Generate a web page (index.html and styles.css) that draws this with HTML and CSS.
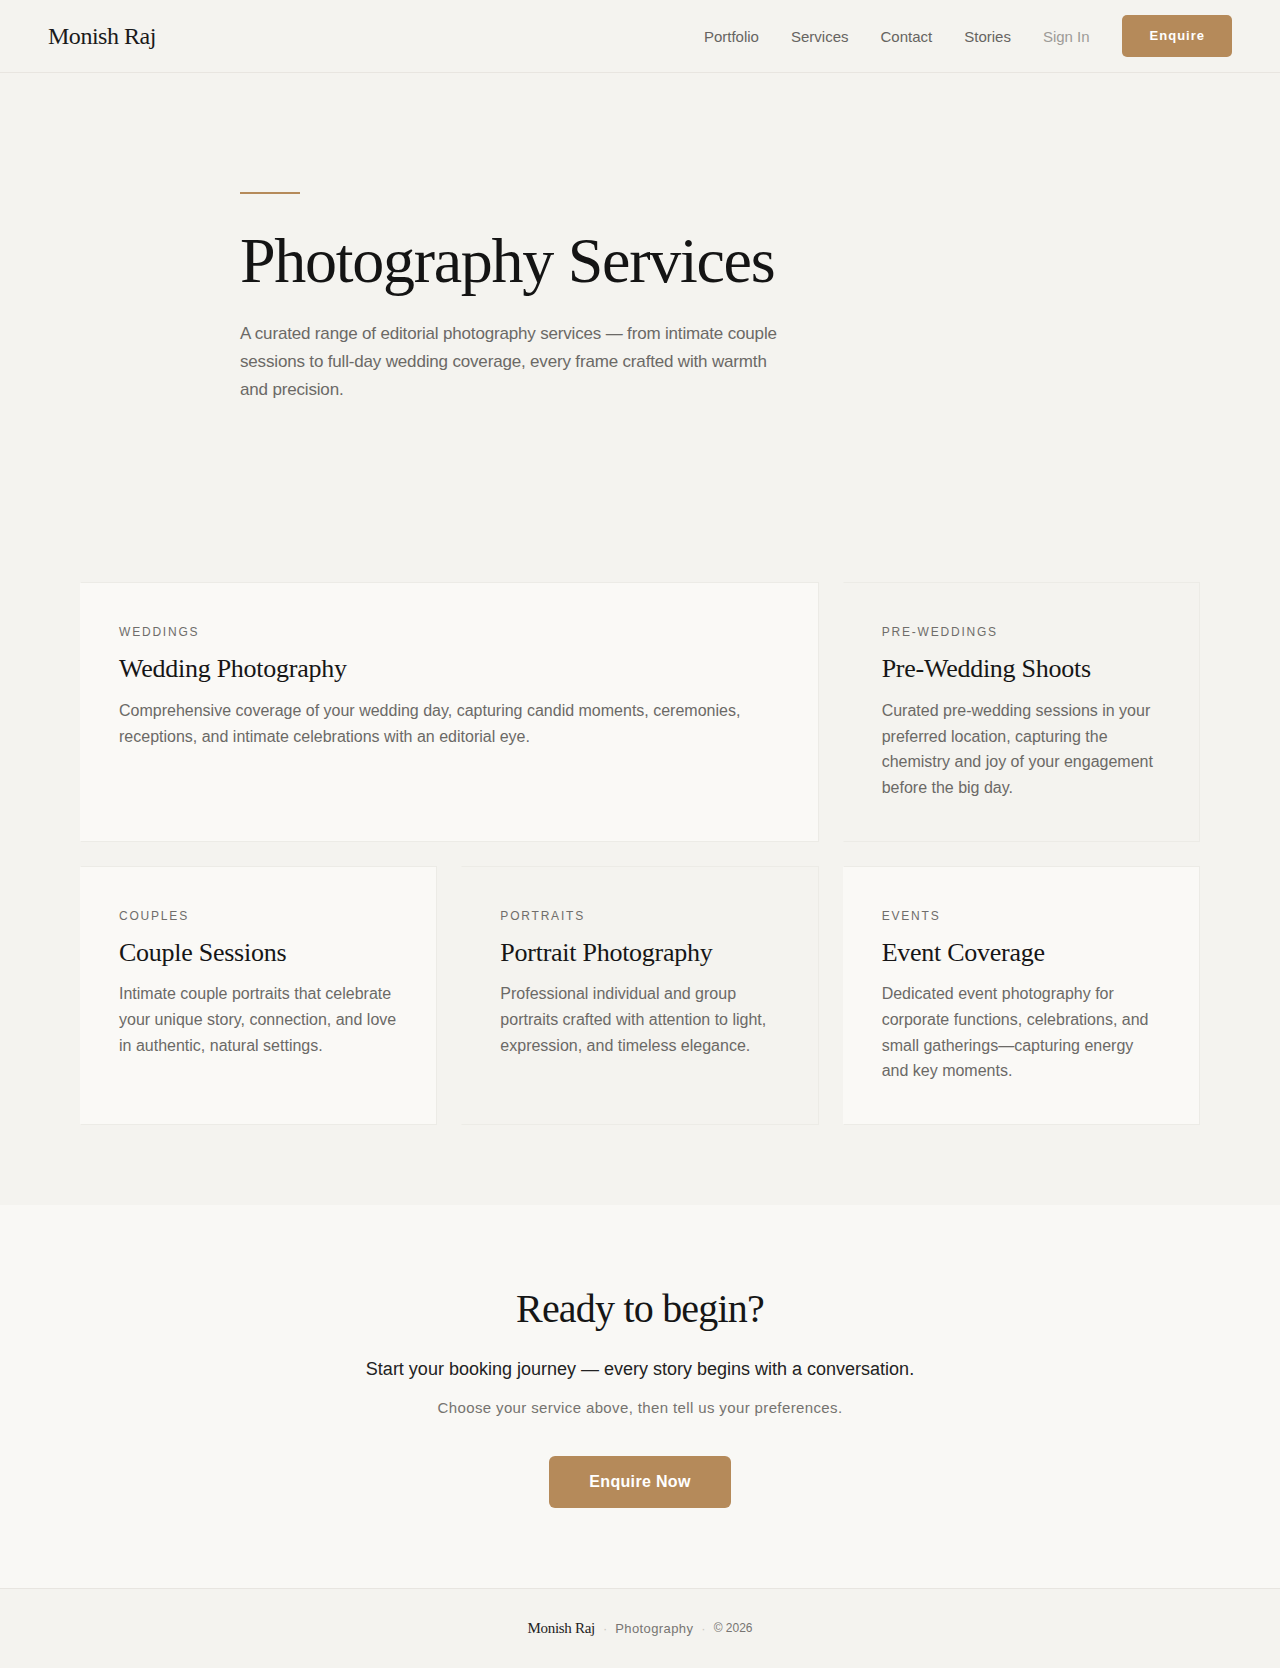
FILE: index.html
```html
<!DOCTYPE html>
<html lang="en">
<head>
<meta charset="utf-8">
<title>Photography Services — Monish Raj</title>
<link rel="stylesheet" href="styles.css">
</head>
<body>
<header class="site-header">
  <a class="logo" href="#">Monish Raj</a>
  <nav class="nav">
    <a class="nav-link" href="#">Portfolio</a>
    <a class="nav-link" href="#">Services</a>
    <a class="nav-link" href="#">Contact</a>
    <a class="nav-link" href="#">Stories</a>
    <a class="nav-link nav-muted" href="#">Sign In</a>
    <a class="btn btn-small" href="#">Enquire</a>
  </nav>
</header>

<main>
  <section class="hero">
    <div class="hero-inner">
      <div class="accent-rule"></div>
      <h1 class="hero-title">Photography Services</h1>
      <p class="hero-lead">A curated range of editorial photography services — from intimate couple sessions to full-day wedding coverage, every frame crafted with warmth and precision.</p>
    </div>
  </section>

  <section class="services">
    <div class="service-grid">
      <article class="card card-light card-wide">
        <div class="card-label">Weddings</div>
        <h2 class="card-title">Wedding Photography</h2>
        <p class="card-text">Comprehensive coverage of your wedding day, capturing candid moments, ceremonies, receptions, and intimate celebrations with an editorial eye.</p>
      </article>
      <article class="card card-plain">
        <div class="card-label">Pre-Weddings</div>
        <h2 class="card-title">Pre-Wedding Shoots</h2>
        <p class="card-text">Curated pre-wedding sessions in your preferred location, capturing the chemistry and joy of your engagement before the big day.</p>
      </article>
      <article class="card card-light">
        <div class="card-label">Couples</div>
        <h2 class="card-title">Couple Sessions</h2>
        <p class="card-text">Intimate couple portraits that celebrate your unique story, connection, and love in authentic, natural settings.</p>
      </article>
      <article class="card card-plain">
        <div class="card-label">Portraits</div>
        <h2 class="card-title">Portrait Photography</h2>
        <p class="card-text">Professional individual and group portraits crafted with attention to light, expression, and timeless elegance.</p>
      </article>
      <article class="card card-light">
        <div class="card-label">Events</div>
        <h2 class="card-title">Event Coverage</h2>
        <p class="card-text">Dedicated event photography for corporate functions, celebrations, and small gatherings—capturing energy and key moments.</p>
      </article>
    </div>
  </section>

  <section class="cta">
    <h2 class="cta-title">Ready to begin?</h2>
    <p class="cta-sub">Start your booking journey — every story begins with a conversation.</p>
    <p class="cta-note">Choose your service above, then tell us your preferences.</p>
    <a class="btn btn-large" href="#">Enquire Now</a>
  </section>
</main>

<footer class="site-footer">
  <span class="footer-name">Monish Raj</span>
  <span class="footer-dot">·</span>
  <span class="footer-tag">Photography</span>
  <span class="footer-dot">·</span>
  <span class="footer-copy">© 2026</span>
</footer>
</body>
</html>
```

FILE: styles.css
```css
* {
  box-sizing: border-box;
}

html, body {
  margin: 0;
  padding: 0;
}

body {
  background: #f4f3ef;
  color: #1a1a1a;
  font-family: "Liberation Sans", Arial, sans-serif;
}

a {
  text-decoration: none;
  color: inherit;
}

h1, h2, p {
  margin: 0;
}

/* Header */
.site-header {
  height: 73px;
  padding: 0 48px;
  display: flex;
  align-items: center;
  justify-content: space-between;
  border-bottom: 1px solid #e8e5e0;
}

.logo {
  font-family: "Liberation Serif", "Times New Roman", serif;
  font-size: 24px;
  letter-spacing: -0.02em;
  color: #1a1a1a;
}

.nav {
  display: flex;
  align-items: center;
  gap: 32px;
}

.nav-link {
  font-size: 15px;
  color: #666461;
}

.nav-muted {
  color: #9d9b97;
}

.btn {
  display: inline-block;
  background: #b58a5a;
  color: #fff;
  font-weight: 700;
  border-radius: 5px;
}

.btn-small {
  font-size: 13px;
  letter-spacing: 1px;
  line-height: 18px;
  padding: 12px 27px 12px 28px;
}

/* Hero */
.hero {
  padding: 119px 0 118px;
}

.hero-inner {
  max-width: 800px;
  margin: 0 auto;
}

.accent-rule {
  width: 60px;
  height: 2px;
  background: #b58a5a;
  margin-bottom: 32px;
}

.hero-title {
  font-family: "Liberation Serif", "Times New Roman", serif;
  font-weight: 400;
  font-size: 64px;
  line-height: 1.1;
  letter-spacing: -0.02em;
  color: #141414;
  margin-bottom: 24px;
}

.hero-lead {
  max-width: 550px;
  font-size: 17px;
  line-height: 28px;
  letter-spacing: -0.01em;
  color: #6b6966;
}

/* Services */
.services {
  padding: 60px 0 80px;
}

.service-grid {
  max-width: 1120px;
  margin: 0 auto;
  display: grid;
  grid-template-columns: repeat(3, 1fr);
  gap: 24px;
}

.card {
  border: 1px solid #ecebe6;
  border-left-color: transparent;
  padding: 40px 38px;
}

.card-wide {
  grid-column: span 2;
}

.card-light {
  background: #faf9f6;
}

.card-plain {
  background: #f4f3ef;
}

.card-label {
  font-size: 12px;
  line-height: 18px;
  letter-spacing: 1.8px;
  text-transform: uppercase;
  color: #6f6d6a;
  margin-bottom: 11px;
}

.card-title {
  font-family: "Liberation Serif", "Times New Roman", serif;
  font-weight: 400;
  font-size: 26px;
  line-height: 1.3;
  letter-spacing: -0.01em;
  color: #161616;
  margin-bottom: 12px;
}

.card-text {
  font-size: 16px;
  line-height: 1.6;
  color: #6b6966;
}

/* CTA */
.cta {
  background: #f9f8f5;
  padding: 80px 24px 80px;
  text-align: center;
}

.cta-title {
  font-family: "Liberation Serif", "Times New Roman", serif;
  font-weight: 400;
  font-size: 40px;
  line-height: 1.2;
  letter-spacing: -0.02em;
  color: #161616;
  margin-bottom: 22px;
}

.cta-sub {
  font-size: 18px;
  line-height: 1.6;
  color: #222;
  margin-bottom: 12px;
}

.cta-note {
  font-size: 15px;
  line-height: 1.6;
  letter-spacing: 0.025em;
  color: #75736f;
  margin-bottom: 36px;
}

.btn-large {
  font-size: 16px;
  letter-spacing: 0.02em;
  line-height: 20px;
  padding: 16px 40px;
  border-radius: 6px;
}

/* Footer */
.site-footer {
  border-top: 1px solid #e8e5e0;
  height: 80px;
  display: flex;
  align-items: center;
  justify-content: center;
  gap: 8px;
}

.footer-name {
  font-family: "Liberation Serif", "Times New Roman", serif;
  font-size: 15px;
  letter-spacing: -0.02em;
  color: #222;
}

.footer-dot {
  font-size: 13px;
  color: #cbc8c2;
}

.footer-tag {
  font-size: 13px;
  letter-spacing: 0.03em;
  color: #777572;
}

.footer-copy {
  font-size: 12px;
  color: #777572;
}
```
